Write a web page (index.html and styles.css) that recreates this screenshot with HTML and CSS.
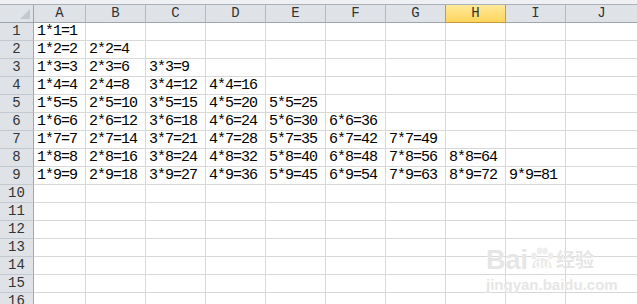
FILE: index.html
```html
<!DOCTYPE html>
<html lang="zh-CN">
<head>
  <meta charset="UTF-8" />
  <title>九九乘法表</title>
  <link rel="stylesheet" href="styles.css">
</head>
<body>

  <div class="ribbon-edge"></div>

  <div class="sheet">
    <div class="corner"></div>
    <div class="col-head">A</div>
    <div class="col-head">B</div>
    <div class="col-head">C</div>
    <div class="col-head">D</div>
    <div class="col-head">E</div>
    <div class="col-head">F</div>
    <div class="col-head">G</div>
    <div class="col-head selected">H</div>
    <div class="col-head">I</div>
    <div class="col-head">J</div>

    <div class="row-head">1</div>
    <div class="cell">1*1=1</div><div class="cell"></div><div class="cell"></div><div class="cell"></div><div class="cell"></div><div class="cell"></div><div class="cell"></div><div class="cell"></div><div class="cell"></div><div class="cell"></div>

    <div class="row-head">2</div>
    <div class="cell">1*2=2</div><div class="cell">2*2=4</div><div class="cell"></div><div class="cell"></div><div class="cell"></div><div class="cell"></div><div class="cell"></div><div class="cell"></div><div class="cell"></div><div class="cell"></div>

    <div class="row-head">3</div>
    <div class="cell">1*3=3</div><div class="cell">2*3=6</div><div class="cell">3*3=9</div><div class="cell"></div><div class="cell"></div><div class="cell"></div><div class="cell"></div><div class="cell"></div><div class="cell"></div><div class="cell"></div>

    <div class="row-head">4</div>
    <div class="cell">1*4=4</div><div class="cell">2*4=8</div><div class="cell">3*4=12</div><div class="cell">4*4=16</div><div class="cell"></div><div class="cell"></div><div class="cell"></div><div class="cell"></div><div class="cell"></div><div class="cell"></div>

    <div class="row-head">5</div>
    <div class="cell">1*5=5</div><div class="cell">2*5=10</div><div class="cell">3*5=15</div><div class="cell">4*5=20</div><div class="cell">5*5=25</div><div class="cell"></div><div class="cell"></div><div class="cell"></div><div class="cell"></div><div class="cell"></div>

    <div class="row-head">6</div>
    <div class="cell">1*6=6</div><div class="cell">2*6=12</div><div class="cell">3*6=18</div><div class="cell">4*6=24</div><div class="cell">5*6=30</div><div class="cell">6*6=36</div><div class="cell"></div><div class="cell"></div><div class="cell"></div><div class="cell"></div>

    <div class="row-head">7</div>
    <div class="cell">1*7=7</div><div class="cell">2*7=14</div><div class="cell">3*7=21</div><div class="cell">4*7=28</div><div class="cell">5*7=35</div><div class="cell">6*7=42</div><div class="cell">7*7=49</div><div class="cell"></div><div class="cell"></div><div class="cell"></div>

    <div class="row-head">8</div>
    <div class="cell">1*8=8</div><div class="cell">2*8=16</div><div class="cell">3*8=24</div><div class="cell">4*8=32</div><div class="cell">5*8=40</div><div class="cell">6*8=48</div><div class="cell">7*8=56</div><div class="cell">8*8=64</div><div class="cell"></div><div class="cell"></div>

    <div class="row-head">9</div>
    <div class="cell">1*9=9</div><div class="cell">2*9=18</div><div class="cell">3*9=27</div><div class="cell">4*9=36</div><div class="cell">5*9=45</div><div class="cell">6*9=54</div><div class="cell">7*9=63</div><div class="cell">8*9=72</div><div class="cell">9*9=81</div><div class="cell"></div>

    <div class="row-head">10</div>
    <div class="cell"></div><div class="cell"></div><div class="cell"></div><div class="cell"></div><div class="cell"></div><div class="cell"></div><div class="cell"></div><div class="cell"></div><div class="cell"></div><div class="cell"></div>

    <div class="row-head">11</div>
    <div class="cell"></div><div class="cell"></div><div class="cell"></div><div class="cell"></div><div class="cell"></div><div class="cell"></div><div class="cell"></div><div class="cell"></div><div class="cell"></div><div class="cell"></div>

    <div class="row-head">12</div>
    <div class="cell"></div><div class="cell"></div><div class="cell"></div><div class="cell"></div><div class="cell"></div><div class="cell"></div><div class="cell"></div><div class="cell"></div><div class="cell"></div><div class="cell"></div>

    <div class="row-head">13</div>
    <div class="cell"></div><div class="cell"></div><div class="cell"></div><div class="cell"></div><div class="cell"></div><div class="cell"></div><div class="cell"></div><div class="cell"></div><div class="cell"></div><div class="cell"></div>

    <div class="row-head">14</div>
    <div class="cell"></div><div class="cell"></div><div class="cell"></div><div class="cell"></div><div class="cell"></div><div class="cell"></div><div class="cell"></div><div class="cell"></div><div class="cell"></div><div class="cell"></div>

    <div class="row-head">15</div>
    <div class="cell"></div><div class="cell"></div><div class="cell"></div><div class="cell"></div><div class="cell"></div><div class="cell"></div><div class="cell"></div><div class="cell"></div><div class="cell"></div><div class="cell"></div>

    <div class="row-head">16</div>
    <div class="cell"></div><div class="cell"></div><div class="cell"></div><div class="cell"></div><div class="cell"></div><div class="cell"></div><div class="cell"></div><div class="cell"></div><div class="cell"></div><div class="cell"></div>
  </div>

  <div class="watermark">
    <div class="wm-logo">
      <span class="wm-bai">Bai</span>
      <span class="wm-paw">
        <svg width="26" height="24" viewBox="0 0 26 24">
          <ellipse cx="5" cy="9" rx="2.8" ry="3.4" />
          <ellipse cx="10.5" cy="4" rx="2.8" ry="3.4" />
          <ellipse cx="16" cy="4" rx="2.8" ry="3.4" />
          <ellipse cx="21.5" cy="9" rx="2.8" ry="3.4" />
          <path d="M3 21 C3 14 8 11 13 11 C18 11 23 14 23 21 Z" />
        </svg>
        <span class="wm-du">du</span>
      </span>
      <span class="wm-cn">经验</span>
    </div>
    <div class="wm-url">jingyan.baidu.com</div>
  </div>

</body>
</html>
```

FILE: styles.css
```css
body {
  margin: 0;
  background: #fff;
  overflow: hidden;
  font-family: "Liberation Mono", "Noto Sans CJK SC", monospace;
}
.ribbon-edge {
  height: 5px;
  box-sizing: border-box;
  background: #eef0f3;
  border-bottom: 1px solid #a9b0b8;
}
.sheet {
  display: grid;
  grid-template-columns: 34px 52px repeat(8, 60px) 72px;
  grid-auto-rows: 18px;
  width: 638px;
}
.sheet > div {
  box-sizing: border-box;
  border-right: 1px solid #d8d8d8;
  border-bottom: 1px solid #d8d8d8;
}
.corner {
  position: relative;
  background: #dfe3e8;
}
.sheet > .corner {
  border-right: 1px solid #9ea5ad;
  border-bottom: 1px solid #9ea5ad;
}
.corner::after {
  content: "";
  position: absolute;
  right: 3px;
  bottom: 3px;
  border-style: solid;
  border-width: 0 0 10px 10px;
  border-color: transparent transparent #c3c8cf transparent;
}
.col-head,
.row-head {
  background: #dfe3e8;
  color: #333;
  font-size: 14px;
  line-height: 17px;
  text-align: center;
}
.sheet > .col-head {
  border-right: 1px solid #b4bac1;
  border-bottom: 1px solid #9ea5ad;
}
.sheet > .row-head {
  border-right: 1px solid #9ea5ad;
  border-bottom: 1px solid #c4c9cf;
}
.sheet > .col-head.selected {
  background: linear-gradient(#ffe99a, #ffd55c);
  border-right: 1px solid #c99a3c;
  border-bottom: 1px solid #c99a3c;
  margin-left: -1px;
  border-left: 1px solid #c99a3c;
}
.cell {
  color: #000;
  font-size: 15px;
  letter-spacing: -1px;
  line-height: 17px;
  padding-left: 3px;
  white-space: nowrap;
}
.watermark {
  position: absolute;
  left: 486px;
  top: 247px;
  color: #e6e6e6;
  text-shadow: 0 0 1px #fff;
  font-family: "Liberation Sans", "Noto Sans CJK SC", sans-serif;
}
.wm-logo {
  display: flex;
  align-items: flex-end;
  gap: 1px;
}
.wm-bai {
  font-size: 27px;
  font-weight: bold;
  line-height: 26px;
}
.wm-paw {
  position: relative;
  width: 26px;
  height: 26px;
}
.wm-paw svg {
  fill: #eeeeee;
}
.wm-du {
  position: absolute;
  left: 5px;
  bottom: 2px;
  font-size: 13px;
  font-weight: bold;
  color: #fff;
  text-shadow: 0 0 1px #cfcfcf;
}
.wm-cn {
  font-size: 19px;
  line-height: 24px;
  font-weight: bold;
}
.wm-url {
  font-size: 15px;
  font-weight: bold;
  margin-top: 3px;
}
```
